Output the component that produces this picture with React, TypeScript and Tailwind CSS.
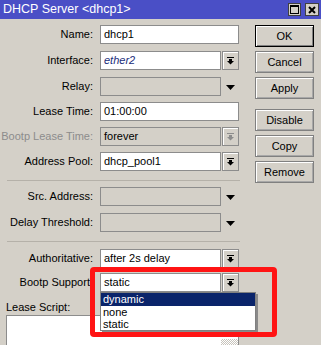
const font = { fontFamily: '"Liberation Sans", Arial, sans-serif' };

function DropIcon({ dim }: { dim?: boolean }) {
  return (
    <svg width="7" height="8" viewBox="0 0 7 8" fill={dim ? "#8c8c8c" : "#000"}>
      <rect x="0" y="0" width="7" height="1" />
      <rect x="2" y="2" width="3" height="2" />
      <polygon points="0,4 7,4 3.5,7.5" />
    </svg>
  );
}

function Arrow() {
  return (
    <svg width="9" height="5" viewBox="0 0 9 5" fill="#000">
      <polygon points="0,0 9,0 4.5,5" />
    </svg>
  );
}

function Row({ label, mt, dim, children }: { label: string; mt: string; dim?: boolean; children: React.ReactNode }) {
  return (
    <div className={`flex items-center h-[19px] ${mt}`}>
      <div className={`w-[93px] text-right whitespace-nowrap ${dim ? "text-[#8c8c8c]" : "text-black"}`}>{label}</div>
      <div className="ml-[7px] w-[139px] h-full flex">{children}</div>
    </div>
  );
}

function Field({ value, italic, gray }: { value?: string; italic?: boolean; gray?: boolean }) {
  return (
    <div
      className={`flex-1 h-full border border-[#8c8c8c] flex items-center pl-[3px] ${gray ? "bg-[#d4d0c8]" : "bg-white"} ${italic ? "italic text-[#1b2d7a]" : "text-black"}`}
    >
      {value}
    </div>
  );
}

function DropBtn({ dim }: { dim?: boolean }) {
  return (
    <div className="w-[17px] h-full ml-[1px] border border-[#8c8c8c] bg-[#d4d0c8] shadow-[inset_1px_1px_0_#fff] flex items-center justify-center">
      <DropIcon dim={dim} />
    </div>
  );
}

function ArrowSlot() {
  return (
    <div className="w-[18px] h-full flex items-center justify-center pt-[1px]">
      <Arrow />
    </div>
  );
}

function Btn({ label, primary, mt }: { label: string; primary?: boolean; mt?: string }) {
  return (
    <div
      className={`h-[22px] w-[59px] flex items-center justify-center bg-[#d4d0c8] text-black ${mt ?? ""} ${
        primary
          ? "border border-black shadow-[inset_1px_1px_0_#fff,inset_-1px_-1px_0_#808080]"
          : "border border-[#808080] shadow-[inset_1px_1px_0_#fff,inset_-1px_-1px_0_#a8a8a8]"
      }`}
    >
      {label}
    </div>
  );
}

export default function App() {
  return (
    <div className="w-[321px] h-[345px] bg-[#d4d0c8] relative overflow-hidden text-[11px] leading-none" style={font}>
      {/* title bar */}
      <div className="h-[19px] bg-[#4a4fc6] flex items-center pl-[3px] pr-[2px] text-white text-[12.5px]">
        <span>DHCP Server &lt;dhcp1&gt;</span>
        <div className="ml-auto flex gap-[4px]">
          <div className="w-[13px] h-[13px] bg-[#d4d0c8] border border-[#404040] flex items-center justify-center">
            <div className="w-[9px] h-[9px] border border-black border-t-2" />
          </div>
          <div className="w-[14px] h-[13px] bg-[#d4d0c8] border border-[#404040] flex items-center justify-center">
            <svg width="8" height="8" viewBox="0 0 8 8" stroke="#000" strokeWidth="2">
              <path d="M1 1 L7 7 M7 1 L1 7" />
            </svg>
          </div>
        </div>
      </div>

      <div className="flex">
        {/* form */}
        <div className="w-[240px] pt-[6px]">
          <Row label="Name:" mt="mt-0">
            <Field value="dhcp1" />
          </Row>
          <Row label="Interface:" mt="mt-[7px]">
            <Field value="ether2" italic />
            <DropBtn />
          </Row>
          <Row label="Relay:" mt="mt-[7px]">
            <Field gray />
            <ArrowSlot />
          </Row>
          <Row label="Lease Time:" mt="mt-[6px]">
            <Field value="01:00:00" />
          </Row>
          <Row label="Bootp Lease Time:" mt="mt-[6px]" dim>
            <Field value="forever" gray />
            <DropBtn dim />
          </Row>
          <Row label="Address Pool:" mt="mt-[6px]">
            <Field value="dhcp_pool1" />
            <DropBtn />
          </Row>
          <div className="mt-[9px] ml-[7px] border-t border-[#b5b1a9]" />
          <Row label="Src. Address:" mt="mt-[6px]">
            <Field gray />
            <ArrowSlot />
          </Row>
          <Row label="Delay Threshold:" mt="mt-[7px]">
            <Field gray />
            <ArrowSlot />
          </Row>
          <div className="mt-[9px] ml-[7px] border-t border-[#b5b1a9]" />
          <Row label="Authoritative:" mt="mt-[7px]">
            <Field value="after 2s delay" />
            <DropBtn />
          </Row>
          <Row label="Bootp Support:" mt="mt-[5px]">
            <Field value="static" />
            <DropBtn />
          </Row>
          <div className="mt-[10px] ml-[6px] h-[12px] text-black">Lease Script:</div>
          <div className="mt-[1px] ml-[6px] w-[233px] h-[40px] bg-white border border-[#8c8c8c] flex justify-end">
            <div className="w-[17px] h-full mt-[23px] bg-[repeating-conic-gradient(#c8c4bc_0_25%,#ffffff_0_50%)] bg-[length:2px_2px]" />
          </div>
        </div>

        {/* buttons */}
        <div className="ml-[15px] pt-[6px] flex flex-col gap-[4px]">
          <Btn label="OK" primary />
          <Btn label="Cancel" />
          <Btn label="Apply" />
          <Btn label="Disable" mt="mt-[6px]" />
          <Btn label="Copy" />
          <Btn label="Remove" />
        </div>
      </div>

      {/* dropdown list */}
      <div className="absolute left-[100px] top-[292px] w-[156px] h-[39px] bg-white border border-[#808080] shadow-[2px_2px_0_#8a8a8a] flex flex-col text-black">
        <div className="h-[13px] bg-[#0a246a] text-white flex items-center pl-[2px]">dynamic</div>
        <div className="h-[12px] flex items-center pl-[2px]">none</div>
        <div className="h-[12px] flex items-center pl-[2px]">static</div>
      </div>

      {/* red highlight */}
      <div className="absolute left-[90px] top-[267px] w-[187px] h-[70px] border-[5px] border-[#ff1414] rounded-[4px]" />
    </div>
  );
}
